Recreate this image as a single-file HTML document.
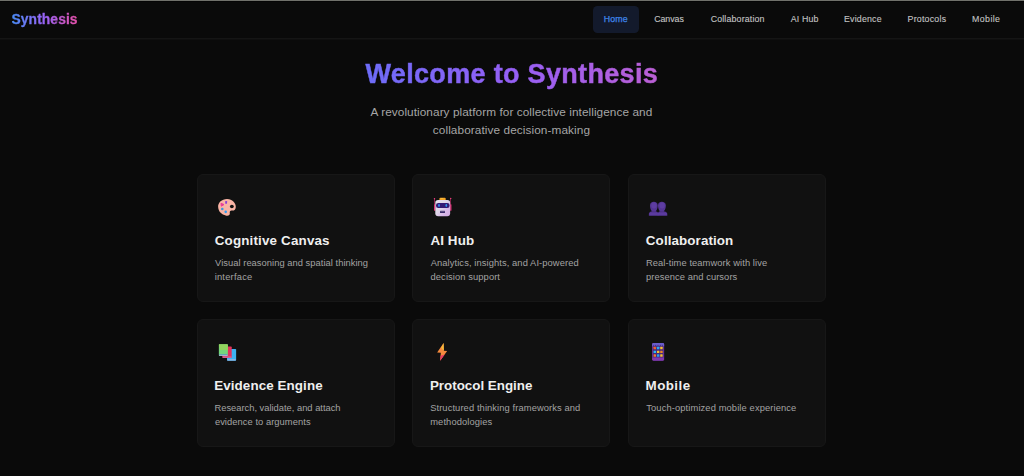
<!DOCTYPE html>
<html><head><meta charset="utf-8">
<style>
*{box-sizing:border-box;margin:0;padding:0}
html,body{width:1024px;height:476px;overflow:hidden;background:#0a0a0a;font-family:"Liberation Sans",sans-serif}
body{position:relative}
.topline{position:absolute;left:0;top:0;width:1024px;height:2px;background:linear-gradient(180deg,#70716b 0,#70716b 1px,#050505 1px,#050505 2px)}
.hdr{position:absolute;left:0;top:38px;width:1024px;height:2px;background:linear-gradient(180deg,#151515 0,#151515 1px,#0f0f0f 1px,#0f0f0f 2px)}
.act{position:absolute;left:592.9px;top:6.1px;width:45.7px;height:26.8px;background:#131a2c;border-radius:4.5px}
.t{position:absolute;white-space:nowrap;line-height:1.2}
.card{position:absolute;width:197.6px;height:127.7px;background:#111111;border:1px solid #171717;border-radius:6px}
svg{position:absolute;overflow:visible}
</style></head><body>
<div class="hdr"></div><div class="topline"></div><div class="act"></div>
<header><div class="t" id="logo" style="left:11.56px;top:12.00px;font-size:13.8px;font-weight:700;letter-spacing:0.097px;background:linear-gradient(90deg,#4a8cf7 0%,#9a62f6 50%,#e84fa6 100%);-webkit-background-clip:text;background-clip:text;color:transparent;-webkit-text-stroke:0.35px transparent">Synthesis</div>
<nav><a class="t" id="n0" style="left:603.85px;top:14.00px;font-size:8.8px;font-weight:400;letter-spacing:0.141px;color:#3f86ea;-webkit-text-stroke:0.25px #3f86ea">Home</a><a class="t" id="n1" style="left:654.18px;top:14.00px;font-size:8.8px;font-weight:400;letter-spacing:-0.035px;color:#c2c2c2;-webkit-text-stroke:0.12px #c2c2c2">Canvas</a><a class="t" id="n2" style="left:710.68px;top:14.00px;font-size:8.8px;font-weight:400;letter-spacing:0.165px;color:#c2c2c2;-webkit-text-stroke:0.12px #c2c2c2">Collaboration</a><a class="t" id="n3" style="left:790.79px;top:14.00px;font-size:8.8px;font-weight:400;letter-spacing:0.144px;color:#c2c2c2;-webkit-text-stroke:0.12px #c2c2c2">AI Hub</a><a class="t" id="n4" style="left:843.96px;top:14.00px;font-size:8.8px;font-weight:400;letter-spacing:0.211px;color:#c2c2c2;-webkit-text-stroke:0.12px #c2c2c2">Evidence</a><a class="t" id="n5" style="left:907.61px;top:14.00px;font-size:8.8px;font-weight:400;letter-spacing:0.219px;color:#c2c2c2;-webkit-text-stroke:0.12px #c2c2c2">Protocols</a><a class="t" id="n6" style="left:972.06px;top:14.00px;font-size:8.8px;font-weight:400;letter-spacing:0.408px;color:#c2c2c2;-webkit-text-stroke:0.12px #c2c2c2">Mobile</a></nav></header>
<main><h1 class="t" id="title" style="left:365.48px;top:58.00px;font-size:27px;font-weight:700;letter-spacing:0.327px;-webkit-text-stroke:0.5px transparent;background:linear-gradient(90deg,#6d6cf8 0px,#965ff5 152px,#bb5fd5 292px);-webkit-background-clip:text;background-clip:text;color:transparent">Welcome to Synthesis</h1><p class="t" id="s1" style="left:370.57px;top:105.00px;font-size:11.8px;font-weight:400;letter-spacing:0.066px;color:#a6a6a6">A revolutionary platform for collective intelligence and</p><p class="t" id="s2" style="left:432.81px;top:123.00px;font-size:11.8px;font-weight:400;letter-spacing:0.088px;color:#a6a6a6">collaborative decision-making</p>
<section><div class="card" style="left:197px;top:174px"></div>
<h3 class="t" id="t0" style="left:214.72px;top:233.00px;font-size:13.4px;font-weight:700;letter-spacing:0.165px;color:#efefef">Cognitive Canvas</h3>
<p class="t" id="d0_0" style="left:215.09px;top:258.00px;font-size:9.35px;font-weight:400;letter-spacing:0.039px;color:#a3a3a3">Visual reasoning and spatial thinking</p>
<p class="t" id="d0_1" style="left:214.68px;top:272.00px;font-size:9.35px;font-weight:400;letter-spacing:0.215px;color:#a3a3a3">interface</p>
</section>
<section><div class="card" style="left:412.4px;top:174px"></div>
<h3 class="t" id="t1" style="left:430.42px;top:233.00px;font-size:13.4px;font-weight:700;letter-spacing:0.114px;color:#efefef">AI Hub</h3>
<p class="t" id="d1_0" style="left:430.70px;top:258.00px;font-size:9.35px;font-weight:400;letter-spacing:0.091px;color:#a3a3a3">Analytics, insights, and AI-powered</p>
<p class="t" id="d1_1" style="left:430.54px;top:272.00px;font-size:9.35px;font-weight:400;letter-spacing:0.093px;color:#a3a3a3">decision support</p>
</section>
<section><div class="card" style="left:628px;top:174px"></div>
<h3 class="t" id="t2" style="left:645.86px;top:233.00px;font-size:13.4px;font-weight:700;letter-spacing:0.095px;color:#efefef">Collaboration</h3>
<p class="t" id="d2_0" style="left:645.99px;top:258.00px;font-size:9.35px;font-weight:400;letter-spacing:0.082px;color:#a3a3a3">Real-time teamwork with live</p>
<p class="t" id="d2_1" style="left:645.98px;top:272.00px;font-size:9.35px;font-weight:400;letter-spacing:0.075px;color:#a3a3a3">presence and cursors</p>
</section>
<section><div class="card" style="left:197px;top:319.2px"></div>
<h3 class="t" id="t3" style="left:214.23px;top:378.00px;font-size:13.4px;font-weight:700;letter-spacing:0.090px;color:#efefef">Evidence Engine</h3>
<p class="t" id="d3_0" style="left:214.45px;top:403.00px;font-size:9.35px;font-weight:400;letter-spacing:-0.003px;color:#a3a3a3">Research, validate, and attach</p>
<p class="t" id="d3_1" style="left:214.89px;top:417.00px;font-size:9.35px;font-weight:400;letter-spacing:0.057px;color:#a3a3a3">evidence to arguments</p>
</section>
<section><div class="card" style="left:412.4px;top:319.2px"></div>
<h3 class="t" id="t4" style="left:429.95px;top:378.00px;font-size:13.4px;font-weight:700;letter-spacing:-0.016px;color:#efefef">Protocol Engine</h3>
<p class="t" id="d4_0" style="left:430.14px;top:403.00px;font-size:9.35px;font-weight:400;letter-spacing:0.097px;color:#a3a3a3">Structured thinking frameworks and</p>
<p class="t" id="d4_1" style="left:430.23px;top:417.00px;font-size:9.35px;font-weight:400;letter-spacing:0.102px;color:#a3a3a3">methodologies</p>
</section>
<section><div class="card" style="left:628px;top:319.2px"></div>
<h3 class="t" id="t5" style="left:645.54px;top:378.00px;font-size:13.4px;font-weight:700;letter-spacing:0.440px;color:#efefef">Mobile</h3>
<p class="t" id="d5_0" style="left:646.27px;top:403.00px;font-size:9.35px;font-weight:400;letter-spacing:0.111px;color:#a3a3a3">Touch-optimized mobile experience</p>
</section>
</main>
<!-- palette -->
<svg style="left:206px;top:190px" width="40" height="34" viewBox="0 0 560 476">
<path d="M170 238C166 176 226 124 298 127C366 130 419 180 417 237C416 276 393 291 364 287C340 284 328 298 333 319C340 350 313 366 284 359C214 343 173 300 170 238Z" fill="#f9b4a5"/>
<ellipse cx="362" cy="231" rx="27" ry="23" fill="#111"/>
<path d="M210 186L252 204L214 226Z" stroke="#ea3d97" stroke-width="14" stroke-linejoin="round" fill="#ea3d97"/>
<rect x="269" y="153" width="26" height="40" rx="8" fill="#8d3fd6"/>
<circle cx="228" cy="266" r="18" fill="#3f96dc"/>
<circle cx="276" cy="306" r="18" fill="#2f9df0"/>
</svg>
<!-- robot -->
<svg style="left:422px;top:190px" width="40" height="34" viewBox="0 0 560 476">
<defs><linearGradient id="rh" x1="0" y1="0" x2="1" y2="1"><stop offset="0" stop-color="#e6e1ec"/><stop offset=".45" stop-color="#dfd6e8"/><stop offset=".7" stop-color="#d8b9e8"/><stop offset="1" stop-color="#d2a9e4"/></linearGradient></defs>
<rect x="168" y="200" width="18" height="92" rx="8" fill="#e8357c"/>
<rect x="394" y="200" width="18" height="92" rx="8" fill="#e8357c"/>
<rect x="171" y="120" width="8" height="120" fill="#d92f73"/>
<rect x="398" y="118" width="8" height="120" fill="#d92f73"/>
<circle cx="175" cy="122" r="10" fill="#f0407f"/>
<circle cx="402" cy="120" r="10" fill="#f0407f"/>
<rect x="244" y="108" width="88" height="44" rx="14" fill="#f5a524"/>
<rect x="260" y="112" width="40" height="12" rx="6" fill="#f9c64a"/>
<rect x="186" y="140" width="208" height="226" rx="40" fill="url(#rh)"/>
<rect x="196" y="182" width="190" height="70" rx="32" fill="#341c74"/>
<ellipse cx="238" cy="217" rx="12" ry="20" fill="#2f95ee"/>
<ellipse cx="340" cy="217" rx="12" ry="20" fill="#2f95ee"/>
<rect x="252" y="290" width="70" height="32" rx="8" fill="#3b2a6c"/>
<rect x="258" y="291" width="58" height="8" rx="4" fill="#cfc6e0"/>
</svg>
<!-- people -->
<svg style="left:638px;top:190px" width="40" height="34" viewBox="0 0 560 476">
<g fill="#543594">
<path d="M168 216C168 182 192 165 222 165C252 165 276 182 276 216C276 252 264 276 254 290L254 304L190 304L190 290C180 276 168 252 168 216Z"/>
<path d="M280 216C280 182 304 165 334 165C364 165 390 182 390 216C390 252 378 276 366 290L366 304L302 304L302 290C292 276 280 252 280 216Z"/>
<path d="M152 360v-28c0-22 30-34 70-34s62 12 62 34v28z"/>
<path d="M276 360v-28c0-22 26-34 62-34s72 12 72 34v28z"/>
</g>
<ellipse cx="224" cy="218" rx="36" ry="42" fill="#6241a8" opacity=".7"/>
<ellipse cx="338" cy="218" rx="36" ry="42" fill="#6241a8" opacity=".7"/>
<rect x="160" y="320" width="244" height="32" rx="10" fill="#6040a6" opacity=".55"/>
</svg>
<!-- books -->
<svg style="left:206px;top:335px" width="40" height="34" viewBox="0 0 560 476">
<rect x="294" y="196" width="128" height="164" rx="10" fill="#3db2f2"/>
<rect x="298" y="338" width="118" height="20" fill="#94b4e2"/>
<rect x="228" y="161" width="132" height="161" rx="10" fill="#e2335c"/>
<rect x="234" y="300" width="124" height="20" fill="#cf6a9c"/>
<rect x="180" y="131" width="126" height="161" rx="8" fill="#74d67c"/>
<path d="M180 139a8 8 0 0 1 8-8h110a8 8 0 0 1 8 8v77l-16-14-16 14-16-14-16 14-16-14-16 14-14-12z" fill="#93d45e"/>
<rect x="184" y="272" width="118" height="20" fill="#aab9d8"/>
<rect x="184" y="266" width="118" height="8" fill="#3f8fb8"/>
</svg>
<!-- bolt -->
<svg style="left:422px;top:335px" width="40" height="34" viewBox="0 0 560 476">
<path d="M302 112L212 246L264 250L254 362L352 224L306 222Z" fill="#f58a3e"/>
<path d="M302 112L270 180L306 222Z" fill="#f6bd3a"/>
<path d="M260 292L254 362L318 272Z" fill="#ea3a66"/>
</svg>
<!-- phone -->
<svg style="left:638px;top:335px" width="40" height="34" viewBox="0 0 560 476">
<rect x="198" y="112" width="168" height="248" rx="20" fill="#7a38aa"/>
<path d="M198 132a20 20 0 0 1 20-20h128a20 20 0 0 1 20 20v26h-168z" fill="#6a5dcc"/>
<g fill="#43307f"><rect x="214" y="138" width="12" height="18"/><rect x="238" y="138" width="12" height="18"/><rect x="262" y="138" width="12" height="18"/><rect x="286" y="138" width="12" height="18"/><rect x="310" y="138" width="12" height="18"/><rect x="334" y="138" width="12" height="18"/></g>
<rect x="208" y="156" width="148" height="160" fill="#46297a"/>
<rect x="200" y="318" width="164" height="40" rx="16" fill="#8038ad"/>
<g>
<rect x="218" y="166" width="34" height="34" rx="5" fill="#f0602c"/><rect x="265" y="166" width="34" height="34" rx="5" fill="#2aa8f0"/><rect x="311" y="166" width="34" height="34" rx="5" fill="#f5c030"/>
<rect x="218" y="219" width="34" height="34" rx="5" fill="#2ab8f5"/><rect x="265" y="219" width="34" height="34" rx="5" fill="#f5c030"/><rect x="311" y="219" width="34" height="34" rx="5" fill="#f08a22"/>
<rect x="218" y="271" width="34" height="34" rx="5" fill="#f07a2c"/><rect x="265" y="271" width="34" height="34" rx="5" fill="#2a9cf0"/><rect x="311" y="271" width="34" height="34" rx="5" fill="#f5c030"/>
</g>
</svg>

</body></html>
